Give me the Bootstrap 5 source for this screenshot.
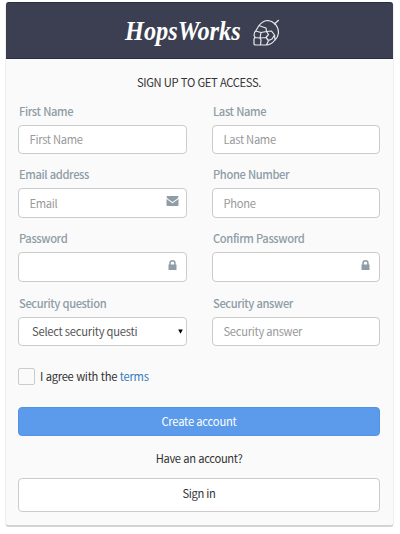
<!DOCTYPE html>
<html lang="en">
<head>
<meta charset="utf-8">
<meta name="viewport" content="width=device-width, initial-scale=1">
<title>HopsWorks</title>
<link href="https://cdn.jsdelivr.net/npm/bootstrap@5.3.0/dist/css/bootstrap.min.css" rel="stylesheet">
<style>
body{font-family:"Noto Sans CJK SC",sans-serif;font-size:11.2px;letter-spacing:-.34px;word-spacing:.4px;line-height:20px;color:#333;background:#fff;height:534px;overflow:hidden}
.signup{margin:2px 6px 0 5px;height:525px;background:#fafafa;border:1px solid #eee;border-top:0;border-bottom:2px solid #d3d3d3;border-radius:4px}
.signup-head{height:57px;background:#3b3f51;border-top:1px solid #272d45;border-bottom:1px solid #272d45;border-radius:3px 3px 0 0;padding-left:119px}
.brand{font:italic bold 27px/30px "Liberation Serif",serif;letter-spacing:0;color:#fff;width:116px;white-space:nowrap}
.brand-text{display:inline-block;transform-origin:left center;transform:scaleX(.9)}
.hop{margin-left:11px}
.signup-body{padding:13px 13px 0 12px}
.fields{display:grid;grid-template-columns:169px 168px;column-gap:25px;grid-template-rows:53px 54px 54px 53px;row-gap:10px;margin-top:9px}
.fields label{font-weight:500;letter-spacing:-.4px;color:#8e9da6;display:block;height:20px;padding-left:1px}
.fields .form-control,.fields .form-select{font-size:11.2px;letter-spacing:-.3px;line-height:18px;border:1px solid #ccc;border-radius:4px;padding:4px 10px 5px 10.5px;height:29px;min-height:0;color:#555;box-shadow:none;background-color:#fff}
.fields .form-control::placeholder{color:#999}
.fields .tall{height:30px}
.fields .form-select{padding-left:13px;padding-right:30px;background-image:none;letter-spacing:-.24px}
.field-last{padding-top:1px}
.mark-icon{position:absolute;right:8px;top:7px}
.arrow{position:absolute;right:4px;top:12px}
.agree .form-check-input{width:17px;height:17px;margin:0 5px 0 0;border:1px solid #ccc;border-radius:2px;background:#fafafa}
.agree{height:18px;margin-top:22px;letter-spacing:-.27px}
.agree a{color:#337ab7}
.create{background:#5c9beb!important;border:1px solid #5393e6;color:#fff!important;height:29px;margin-top:22px}
.btn{font-size:11.2px;letter-spacing:-.2px;line-height:18px;padding:3px 4px 5px;border-radius:4px}
.signin{background:#fff;border:1px solid #ccc;height:34px;color:#333;padding:4px 4px 8px;letter-spacing:-.3px}
.have{margin:12px 0 10px}
</style>
<script src="https://cdn.jsdelivr.net/npm/bootstrap@5.3.0/dist/js/bootstrap.bundle.min.js"></script>
</head>
<body>
<main class="signup">
<header class="signup-head d-flex align-items-center">
<div class="brand"><span class="brand-text">HopsWorks</span></div>
<svg class="hop mt-1" width="28" height="28" viewBox="0 0 28 28" fill="none" stroke="#e8e9ed" stroke-width="1.2" stroke-linejoin="round" stroke-linecap="round"><path d="M7 6.500Q11 1.500 16 1.500Q20 2 22.500 4.500Q26.500 8 26.500 14Q26 18 23 21Q19 26 14 26H3L2 25V20L3 18L2 16.500Q2 13 4 11.500L7 6.500M22.500 5L26.500 1.300M7 6.500L9.500 7.500L14 9L14.500 12.500L9 13.500L3.500 12M9 13.500L8 19L2.500 18.500M8 19L9 21L8.500 26M8 19L14 18.500L16.500 21.500L14.500 26M14.500 12.500L16.500 15.500L14 18.500M14.500 12.500L19.500 12L22.500 16L23 21M16.500 21.500L20 20L22.500 16"/></svg>
</header>
<form class="signup-body">
<div class="text-center">SIGN UP TO GET ACCESS.</div>
<div class="fields">
<div><label for="fn">First Name</label><input id="fn" class="form-control mt-1" placeholder="First Name"></div>
<div><label for="ln">Last Name</label><input id="ln" class="form-control mt-1" placeholder="Last Name"></div>
<div><label for="em">Email address</label><div class="position-relative mt-1"><input id="em" class="form-control tall" placeholder="Email"><svg class="mark-icon" width="13" height="12" viewBox="0 0 13 12" fill="#8e9da6"><path d="M.5 1.500Q.5 1 1.500 1H12Q12.500 1 12.500 2Q12 3.500 9.500 5L6.500 7L3.500 5Q1 3.500.5 2zM.5 4L6.500 8.200L12.500 4V10Q12.500 11 11.500 11H1.500Q.5 11 .5 10z"/></svg></div></div>
<div><label for="ph">Phone Number</label><input id="ph" class="form-control tall mt-1" placeholder="Phone"></div>
<div><label for="pw">Password</label><div class="position-relative mt-1"><input id="pw" type="password" class="form-control tall"><svg class="mark-icon" width="13" height="12" viewBox="0 0 13 12" fill="#8e9da6"><path fill-rule="evenodd" d="M2.500 5.500H3.300V4.200Q3.300 1 6.500 1T9.700 4.200V5.500H10.500V11H2.500zM4.800 5.500H8.200V4.300Q8.200 2.500 6.500 2.500T4.800 4.300z"/></svg></div></div>
<div><label for="cp">Confirm Password</label><div class="position-relative mt-1"><input id="cp" type="password" class="form-control tall"><svg class="mark-icon" width="13" height="12" viewBox="0 0 13 12" fill="#8e9da6"><path fill-rule="evenodd" d="M2.500 5.500H3.300V4.200Q3.300 1 6.500 1T9.700 4.200V5.500H10.500V11H2.500zM4.800 5.500H8.200V4.300Q8.200 2.500 6.500 2.500T4.800 4.300z"/></svg></div></div>
<div class="field-last"><label for="sq">Security question</label><div class="position-relative mt-1"><select id="sq" class="form-select"><option>Select security questi</option></select><svg class="arrow" width="5" height="5" viewBox="0 0 5 5"><path d="M.2.5H4.800L2.500 4.700z"/></svg></div></div>
<div class="field-last"><label for="sa">Security answer</label><input id="sa" class="form-control mt-1" placeholder="Security answer"></div>
</div>
<div class="agree d-flex align-items-center"><input id="ag" type="checkbox" class="form-check-input"><label for="ag">I agree with the <a href="#" class="text-decoration-none">terms</a></label></div>
<button type="button" class="btn create w-100 d-block">Create account</button>
<div class="have text-center">Have an account?</div>
<button type="button" class="btn signin w-100 d-block">Sign in</button>
</form>
</main>
</body>
</html>
